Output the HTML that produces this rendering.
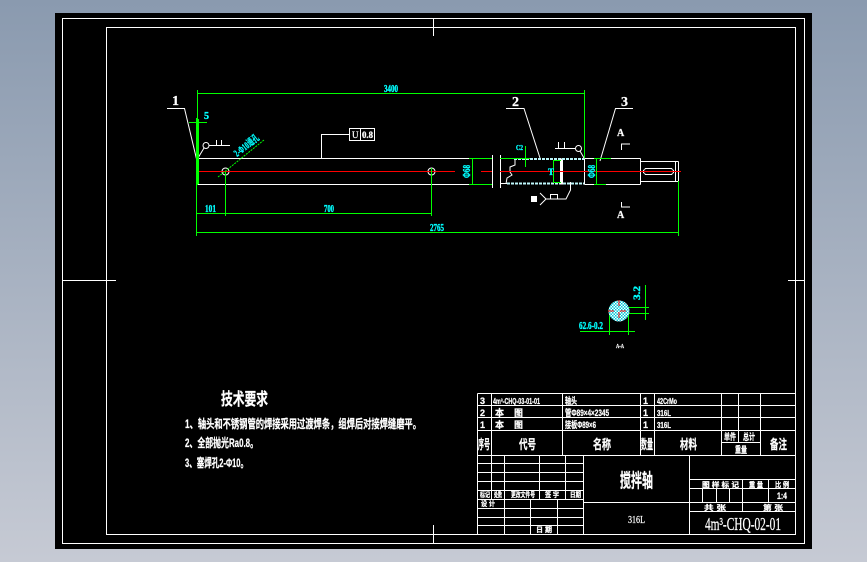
<!DOCTYPE html>
<html><head><meta charset="utf-8"><style>
html,body{margin:0;padding:0;width:867px;height:562px;overflow:hidden;background:linear-gradient(180deg,#8a9aaf 0%,#c6cad4 100%)}
svg{position:absolute;left:0;top:0;display:block;font-family:"Liberation Sans","Noto Sans CJK SC",sans-serif;font-weight:bold}
.w{fill:#fff;stroke:#fff;stroke-width:.25}
.c{fill:#00ffff;stroke:#00ffff;stroke-width:.35}
.s,.s text,text.s{font-family:"Liberation Serif","Noto Serif CJK SC",serif}
</style></head><body>
<svg width="867" height="562" viewBox="0 0 867 562" xmlns="http://www.w3.org/2000/svg">
<defs><pattern id="h" width="3" height="3" patternUnits="userSpaceOnUse"><rect width="3" height="3" fill="#fff"/><rect width="1.5" height="1.5" fill="#00c8d8"/><rect x="1.5" y="1.5" width="1.5" height="1.5" fill="#00c8d8"/></pattern></defs>
<rect x="55" y="13" width="757" height="536" fill="#000"/>
<g fill="none" stroke="#fff" stroke-width="1" shape-rendering="crispEdges">
<rect x="62.5" y="18.5" width="742" height="525"/>
<rect x="106.5" y="27.5" width="689" height="507"/>
<path d="M63 280.5H116M788 280.5H804M433.5 19V36M433.5 525V543"/>
<path d="M477.5 393.5H795M477.5 405.5H795M477.5 417.5H795M477.5 430.5H795M477.5 455.5H795M477.5 393.5V534M491.5 393.5V499.5M562.5 393.5V455.5M640.5 393.5V455.5M654.5 393.5V455.5M721.5 393.5V455.5M738.5 393.5V442.5M760.5 393.5V455.5M721.5 442.5H760.5"/>
<path d="M477.5 463.5H583M477.5 472.5H583M477.5 481.5H583M477.5 490.5H583M477.5 499.5H583M477.5 508.5H583M477.5 517.5H583M477.5 525.5H583M504.5 455.5V534M539.5 455.5V499.5M565.5 455.5V499.5M530.5 499.5V534M557.5 499.5V534M583.5 455.5V534"/>
<path d="M583.5 502.5H795M689.5 455.5V534M689.5 479.5H795M689.5 488.5H795M689.5 511.5H795M742.5 479.5V511.5M768.5 479.5V502.5M702.5 488.5V502.5M716.5 488.5V502.5M729.5 488.5V502.5"/>
<path d="M197.5 158.5H469M197.5 184.5H469M500 158.5H514M500 183.5H507M584.5 158.5H640.5M584.5 184.5H640.5M640.5 158.5V184.5M584.5 158.5V184.5M492.5 155V188M500.5 155V188M561.5 158.5V184.5M562.5 158.5V184.5"/>
<path d="M640.5 161.5H675.5V181.5H640.5M675.5 161.5V181.5M678.5 161.5V181.5M675.5 161.5H678.5M675.5 181.5H678.5"/>
<rect x="643.5" y="168.5" width="30" height="6" rx="3"/>
<path d="M321.5 158V134.5H349.5M360.5 128.5V140.5"/>
<rect x="349.5" y="128.5" width="25" height="12"/>
</g>
<g fill="none" stroke="#fff" stroke-width="1">
<path d="M167 108.5H184.5L197 161"/>
<path d="M506 108.5H524L540 158"/>
<path d="M633 108.5H615.5L600 161"/>
<circle cx="206" cy="145.5" r="3"/>
<path d="M204 148L198 158M209 145.5H230M216.5 145.5V140M221.5 145.5V140"/>
<path d="M555 148.5H575M558.5 148.5V142M564.5 148.5V142"/>
<circle cx="578.5" cy="148.5" r="3"/>
<path d="M580 151L584 158"/>
<circle cx="225.5" cy="171.5" r="3.5"/>
<circle cx="431.5" cy="171.5" r="3.5"/>
<path d="M515 160V165L510 167V172L512 175L507 178L506 184"/>
<path d="M570.5 182V190L566 199H546L540 193M546 199L540 205M550.5 199V194.5H557.5V199"/>
<path d="M621.5 150V144H630M621.5 202V207H630"/>
</g>
<rect x="531" y="196" width="6" height="6" fill="#fff"/>
<path d="M514 159H584M507 183.5H584" stroke="#bdf6fa" stroke-width="2" stroke-dasharray="3 1" fill="none"/>
<path d="M561 158.5V184.5" stroke="#fff" stroke-width="2"/>
<path d="M197 171.5H455M481 171.5H492M500 171.5H681" stroke="#ff0000" stroke-width="1" shape-rendering="crispEdges"/>
<g fill="none" stroke="#00ff00" stroke-width="1" shape-rendering="crispEdges">
<path d="M197.5 93.5H584.5M197.5 90V185M584.5 90V158M198.5 119V184"/>
<path d="M196 232.5H679M196.5 118V236M678.5 181V236"/>
<path d="M196 213.5H431.5M225.5 172V216M431.5 168V216"/>
<path d="M189 122.5H207"/>
<path d="M469 158.5H492M469 184.5H492M472.5 158V185"/>
<path d="M500 158.5H530M525.5 146V167"/>
<path d="M553 160.5H561M553 182.5H561M553.5 160V183"/>
<path d="M594 158.5H611M594 184.5H606M596.5 158V185"/>
<path d="M580 331.5H635M609.5 307V335M628.5 313V335M628 307.5H649M628 313.5H649M645.5 285V320"/>
</g>
<path d="M218 177L264 140" stroke="#00ff00" stroke-width="1" stroke-dasharray="2 1"/>
<circle cx="619" cy="311" r="10.5" fill="url(#h)"/>
<path d="M619 300V322M608 311H632" stroke="#ff0000" stroke-width="1" stroke-dasharray="6 6" fill="none"/>
<g class="c s">
<text x="384" y="92" font-size="10" textLength="14" lengthAdjust="spacingAndGlyphs">3400</text>
<text x="204" y="119" font-size="10">5</text>
<text x="205" y="212" font-size="11" textLength="11" lengthAdjust="spacingAndGlyphs">101</text>
<text x="324" y="212" font-size="11" textLength="10" lengthAdjust="spacingAndGlyphs">700</text>
<text x="430" y="231" font-size="11" textLength="14" lengthAdjust="spacingAndGlyphs">2765</text>
<text transform="translate(237,157) rotate(-38)" font-size="10" textLength="29" lengthAdjust="spacingAndGlyphs">2-Φ10通孔</text>
<text transform="translate(470,178) rotate(-90)" font-size="11" textLength="13" lengthAdjust="spacingAndGlyphs">Φ68</text>
<text transform="translate(595,178) rotate(-90)" font-size="11" textLength="13" lengthAdjust="spacingAndGlyphs">Φ68</text>
<text x="516" y="150" font-size="7" textLength="7" lengthAdjust="spacingAndGlyphs">C2</text>
<text x="548" y="175" font-size="9" textLength="6" lengthAdjust="spacingAndGlyphs">T</text>
<text x="579" y="329" font-size="11" textLength="24" lengthAdjust="spacingAndGlyphs">62.6-0.2</text>
<text transform="translate(640,300) rotate(-90)" font-size="9" textLength="14" lengthAdjust="spacingAndGlyphs">3.2</text>
</g>
<g class="w s">
<text x="172" y="105" font-size="14">1</text>
<text x="512" y="106" font-size="14">2</text>
<text x="621" y="106" font-size="14">3</text>
<text x="617" y="136" font-size="10">A</text>
<text x="617" y="218" font-size="10">A</text>
<text x="616" y="348" font-size="6" textLength="8" lengthAdjust="spacingAndGlyphs">A-A</text>
<text x="352" y="138" font-size="9" font-weight="normal">U</text>
<text x="362" y="138" font-size="9" textLength="11" lengthAdjust="spacingAndGlyphs">0.8</text>
</g>
<g class="w">
<text x="221" y="405" font-size="17" textLength="47" lengthAdjust="spacingAndGlyphs">技术要求</text>
<text x="185" y="428" font-size="12" textLength="236" lengthAdjust="spacingAndGlyphs">1、轴头和不锈钢管的焊接采用过渡焊条，组焊后对接焊缝磨平。</text>
<text x="185" y="447" font-size="12" textLength="73" lengthAdjust="spacingAndGlyphs">2、全部抛光Ra0.8。</text>
<text x="185" y="467" font-size="12" textLength="63" lengthAdjust="spacingAndGlyphs">3、塞焊孔2-Φ10。</text>
</g>
<g class="w">
<text x="480" y="404" font-size="9">3</text>
<text x="480" y="416" font-size="9">2</text>
<text x="480" y="428" font-size="9">1</text>
<text x="493" y="404" font-size="8" textLength="47" lengthAdjust="spacingAndGlyphs">4m³-CHQ-03-01-01</text>
<text x="495" y="416" font-size="9">本</text><text x="514" y="416" font-size="9">图</text>
<text x="495" y="428" font-size="9">本</text><text x="514" y="428" font-size="9">图</text>
<text x="565" y="404" font-size="9" textLength="12" lengthAdjust="spacingAndGlyphs">轴头</text>
<text x="565" y="416" font-size="9" textLength="44" lengthAdjust="spacingAndGlyphs">管Φ89×4×2345</text>
<text x="565" y="428" font-size="9" textLength="31" lengthAdjust="spacingAndGlyphs">接板Φ89×6</text>
<text x="643" y="404" font-size="9">1</text><text x="643" y="416" font-size="9">1</text><text x="643" y="428" font-size="9">1</text>
<text x="657" y="404" font-size="8" textLength="20" lengthAdjust="spacingAndGlyphs">42CrMo</text>
<text x="657" y="416" font-size="8" textLength="14" lengthAdjust="spacingAndGlyphs">316L</text>
<text x="657" y="428" font-size="8" textLength="14" lengthAdjust="spacingAndGlyphs">316L</text>
<text x="478" y="449" font-size="13" textLength="12" lengthAdjust="spacingAndGlyphs">序号</text>
<text x="519" y="449" font-size="13" textLength="17" lengthAdjust="spacingAndGlyphs">代号</text>
<text x="593" y="449" font-size="13" textLength="18" lengthAdjust="spacingAndGlyphs">名称</text>
<text x="641" y="449" font-size="13" textLength="12" lengthAdjust="spacingAndGlyphs">数量</text>
<text x="680" y="449" font-size="13" textLength="17" lengthAdjust="spacingAndGlyphs">材料</text>
<text x="724" y="440" font-size="9" textLength="12" lengthAdjust="spacingAndGlyphs">单件</text>
<text x="743" y="440" font-size="9" textLength="12" lengthAdjust="spacingAndGlyphs">总计</text>
<text x="735" y="453" font-size="9" textLength="12" lengthAdjust="spacingAndGlyphs">重量</text>
<text x="770" y="449" font-size="13" textLength="17" lengthAdjust="spacingAndGlyphs">备注</text>
<text x="480" y="497" font-size="7" textLength="10" lengthAdjust="spacingAndGlyphs">标记</text>
<text x="494" y="497" font-size="7" textLength="8" lengthAdjust="spacingAndGlyphs">处数</text>
<text x="511" y="497" font-size="7" textLength="24" lengthAdjust="spacingAndGlyphs">更改文件号</text>
<text x="545" y="497" font-size="7" textLength="14" lengthAdjust="spacingAndGlyphs">签 字</text>
<text x="570" y="497" font-size="7" textLength="11" lengthAdjust="spacingAndGlyphs">日期</text>
<text x="481" y="506" font-size="7" textLength="14" lengthAdjust="spacingAndGlyphs">设 计</text>
<text x="536" y="532" font-size="7" textLength="16" lengthAdjust="spacingAndGlyphs">日 期</text>
<text x="620" y="487" font-size="19" textLength="33" lengthAdjust="spacingAndGlyphs">搅拌轴</text>
<text x="628" y="523" font-size="11" class="s" textLength="17" lengthAdjust="spacingAndGlyphs" font-weight="normal">316L</text>
<text x="702" y="487" font-size="7" textLength="37" lengthAdjust="spacingAndGlyphs">图 样 标 记</text>
<text x="749" y="487" font-size="7" textLength="14" lengthAdjust="spacingAndGlyphs">重 量</text>
<text x="775" y="487" font-size="7" textLength="14" lengthAdjust="spacingAndGlyphs">比 例</text>
<text x="777" y="499" font-size="9" textLength="10" lengthAdjust="spacingAndGlyphs">1:4</text>
<text x="704" y="510" font-size="7" textLength="22" lengthAdjust="spacingAndGlyphs">共 张</text>
<text x="763" y="510" font-size="7" textLength="20" lengthAdjust="spacingAndGlyphs">第 张</text>
<text x="705" y="530" font-size="18" class="s" font-weight="normal" textLength="76" lengthAdjust="spacingAndGlyphs">4m³-CHQ-02-01</text>
</g>
</svg>
</body></html>
